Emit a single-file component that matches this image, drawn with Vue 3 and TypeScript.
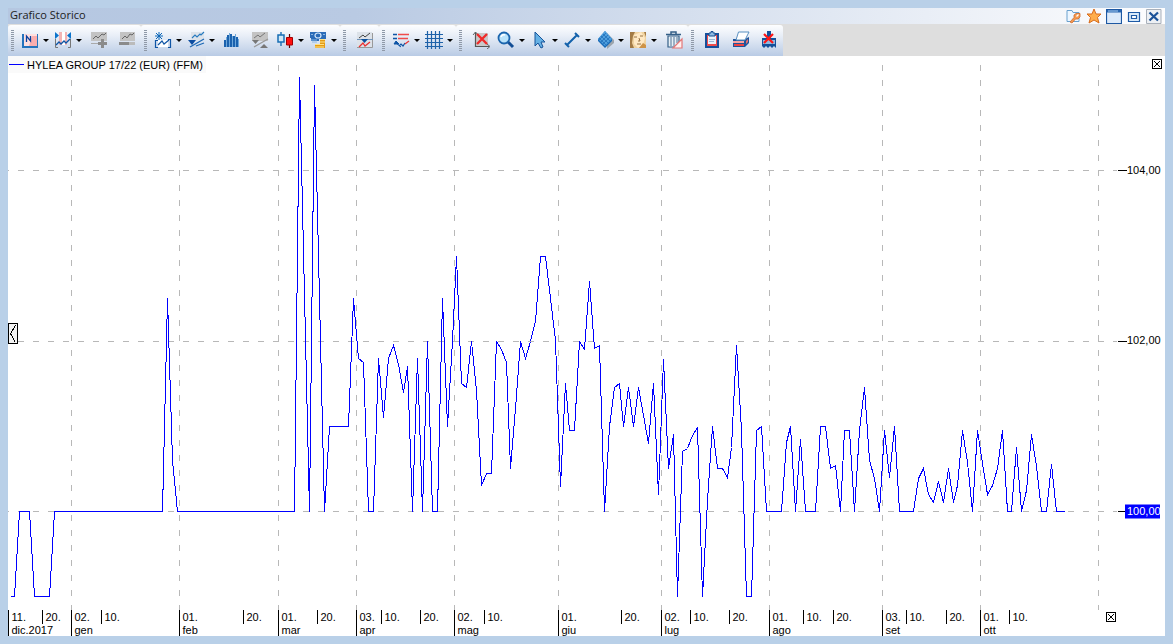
<script setup lang="ts">
interface Shape { d: string; f?: string; s?: string; w?: number }
interface Tool { icon: string; label: string; menu?: boolean }
interface Mark { x: number; day: string; month?: string }

const B = '#0f55a5'
const G = '#8b8b8b'
const icons: Record<string, Shape[]> = {
  period: [
    { d: 'M3 3H17V16H3Z', f: '#ffe0e0' }, { d: 'M11 5H16V15H8Z', f: '#fbaeae' },
    { d: 'M1 3H3V15H16V3H17V17H1Z', f: '#2574bd' }, { d: 'M5.500 11V5L9.500 10V5', s: '#0a3f9c', w: 1.3 },
  ],
  range: [
    { d: 'M5 1H8V14H5ZM11 1H13V14H11Z', f: '#f3b3b3' }, { d: 'M8 1H11V14H8Z', f: '#fff' },
    { d: 'M1 1L5 4.500L1 8ZM17 1L13 4.500L17 8Z', f: '#0b74cc' },
    { d: 'M1.500 8V16.500H4M16.500 8V16.500H14', s: '#777', w: 1 },
    { d: 'M2 14L5 11L7 13L10 10L12 12L16 8', s: B, w: 1.3 },
  ],
  add: [
    { d: 'M1 1H17V10H1Z', f: '#c3c3c3' }, { d: 'M3 8L6 5L8 7L12 3L14 4L16 2', s: '#666', w: 1 },
    { d: 'M11 8H14V11H17V14H14V17H11V14H8V11H11Z', f: G }, { d: 'M1 12.500H8', s: '#aaa', w: 1 },
  ],
  remove: [
    { d: 'M2 1H17V10H2Z', f: '#c3c3c3' }, { d: 'M4 8L7 5L9 7L12 3L14 4L16 2', s: '#666', w: 1 },
    { d: 'M1 11H11V14H1Z', f: G }, { d: 'M11 11H17V14H11Z', f: '#bbb' },
  ],
  newline: [
    { d: 'M5 1V9M1 5H9M2 2L8 8M8 2L2 8', s: '#0b66b8', w: 1 },
    { d: 'M4 9H14V16H4Z', f: '#fff' }, { d: 'M4 9.500H1.500V16.500H4M14 8.500H16.500V16.500H14', s: B, w: 1.2 },
    { d: 'M4 14L8 10L10 13L15 9', s: B, w: 1.2 },
  ],
  trend: [
    { d: 'M4 1H17V9H4Z', f: '#dde3ea' }, { d: 'M5 7L8 4L10 6L13 3L14 4L17 1', s: '#287bc0', w: 1.1 },
    { d: 'M1 9H9L5 14Z', f: '#0c4da1' }, { d: 'M3 16L17 8M9 15L17 12', s: '#1d69b5', w: 1.3 },
  ],
  bars: [
    { d: 'M1 16V9H3V16ZM4 16V4H6V16ZM7 16V3H9V16ZM10 16V5H12V16ZM13 16V6H15V16Z', f: '#1b62ae' },
    { d: 'M3.500 6V16M6.500 2V16M9.500 5V16M12.500 3V16M15.500 8V16', s: '#6fa8da', w: 1 },
  ],
  compare: [
    { d: 'M1 1H17V10H1Z', f: '#c3c3c3' }, { d: 'M3 7L7 4L9 6L14 2', s: '#777', w: 1 },
    { d: 'M1 9H8L4.500 13ZM9 17L13 13L17 17Z', f: '#777' }, { d: 'M3 16L17 8', s: '#999', w: 1.3 },
  ],
  candle: [
    { d: 'M5 1V15', s: '#176db4', w: 1.4 }, { d: 'M2 4H8V11H2Z', f: '#cfe8f8', s: '#176db4', w: 1.5 },
    { d: 'M13.500 3V17', s: '#650000', w: 1.2 }, { d: 'M10.500 6.500H16.500V14H10.500Z', f: '#ff1010', s: '#a00000', w: 1 },
  ],
  money: [
    { d: 'M1 1H17V8H10V10H2V7H1Z', f: '#2c6cb8' }, { d: 'M6 4.500A3 2.500 0 1 1 12 4.500A3 2.500 0 1 1 6 4.500', s: '#d4e7fa', w: 1.2 },
    { d: 'M2 3.500H4M14 3.500H16M2 9H8M3 11H8', s: '#8bb8e4', w: 1 },
    { d: 'M11 8H16V17H6V13H11Z', f: '#e59b16' }, { d: 'M11 8.500H16M11 11H16M6 13.500H15M6 16H15', s: '#ffe486', w: 1 },
  ],
  swap: [
    { d: 'M1 1H16V16H1Z', f: '#dce2e9' }, { d: 'M1 16.500H16.500V2', s: '#999', w: 1 },
    { d: 'M3 7L7 4L9 6L14 2', s: '#444', w: 1 }, { d: 'M1 8.500H17', s: '#7295bb', w: 1 }, { d: 'M5 8H12L8.500 12Z', f: '#0b4e9c' },
    { d: 'M3 16L7 12L9 15L14 11', s: '#ec3030', w: 1.3 },
  ],
  levels: [
    { d: 'M1 3.500H5M1 7.500H5', s: B, w: 1.5 }, { d: 'M6 3.500H17M6 7.500H16', s: '#ef4b4b', w: 1.5 },
    { d: 'M2 13L4 10L7 13ZM4 12L9 16', f: B, s: B, w: 1 }, { d: 'M7 15L9 13L11 15L13 12', s: B, w: 1.2 }, { d: 'M13 13L17 10', s: '#e83434', w: 1.2 },
  ],
  grid: [{ d: 'M2.500 0V18M6.500 0V18M10.500 0V18M14.500 0V18M0 3.500H18M0 7.500H18M0 11.500H18M0 15.500H18', s: '#1e62a9', w: 1.2 }],
  clear: [
    { d: 'M3 2H16V15H3Z', f: '#c9c9c9' }, { d: 'M3.500 1V15.500H17', s: '#555', w: 1.2 },
    { d: 'M1 4L3.500 1L6 4M15 13L18 15.500L15 18', s: '#666', w: 1 },
    { d: 'M5 3L15 13M15 3L5 13', s: '#ef2b2b', w: 2.4 },
  ],
  zoom: [
    { d: 'M11 11L16 16', s: '#124e96', w: 3 },
    { d: 'M1.500 7A5.500 5.500 0 1 1 12.500 7A5.500 5.500 0 1 1 1.500 7', f: '#b9e3fb', s: '#1b65ae', w: 1.8 },
    { d: 'M4 6Q5 3 8 4', s: '#fff', w: 1.5 },
  ],
  pointer: [{ d: 'M5 1V15L8 12L11 17L13 16L11 11H15Z', f: '#65b1e5', s: '#17549a', w: 1 }],
  line: [{ d: 'M4 14L14 4M2 12L6 16M12 2L16 6', s: '#1261ab', w: 2 }],
  layers: [
    { d: 'M11 2L18 9V12L11 18Z', f: '#9da5ad' }, { d: 'M2 8L9 0L16 8V10L9 17L2 10Z', f: '#186bb8' },
    { d: 'M2 8L9 0L16 8L9 15Z', f: '#4f9fdd' }, { d: 'M5 5L12 12M7 3L14 10M3 7L10 14M5 11L12 4M7 13L14 6M3 9L10 2', s: '#1b68b4', w: .7 },
  ],
  portrait: [
    { d: 'M1 1H17V17H1Z', f: '#f0d3a0' }, { d: 'M1 1H6L4 5L3 12L5 17H1ZM15 1H17V6Z', f: '#a37b45' },
    { d: 'M5 4L12 1L16 7L14 14L9 17L5 13Z', f: '#ffe9c4' }, { d: 'M5 6H8M11 5H14M10 7L11 10H9M8 13H12', s: '#8c6536', w: .9 },
    { d: 'M14 12L17 14V17H10', f: '#cd9348' },
  ],
  trash: [
    { d: 'M3 5H14V16H3Z', f: '#e7eff5', s: '#345f87', w: 1.2 }, { d: 'M1 3.500H16M6 3V1H11V3', s: '#345f87', w: 1.5 },
    { d: 'M6 6V15M9 6V15M12 6V12', s: '#517597', w: 1 }, { d: 'M8 17L17 8V17Z', f: '#fff0f0', s: '#e47777', w: 1.2 },
  ],
  clipboard: [
    { d: 'M1 2H15V17H1Z', f: '#164f9b' }, { d: 'M3 4H13V15H3Z', f: '#f04c4c' }, { d: 'M4 5H12V13H4Z', f: '#e9f2fb' },
    { d: 'M5 2H7V.500H9V2H11V5H5Z', f: '#8fbbe4', s: '#174f91', w: 1 }, { d: 'M5 8.500H11M5 10.500H10', s: '#9cb8d6', w: 1 },
  ],
  printer: [
    { d: 'M1 8H13L17 6V12L13 16H1Z', f: '#1e559b' }, { d: 'M6.500 1H17L13 9H4Z', f: '#fff', s: '#5990c1', w: 1 },
    { d: 'M1 10H12V12H1Z', f: '#f7a3a3' }, { d: 'M2 13H12V15H2Z', f: '#ed4040' }, { d: 'M14 10L16 8V11L14 13Z', f: '#e76c6c' },
  ],
  erase: [
    { d: 'M7 0H11V7H16V17L14 15L12 17L10 15L8 17L6 15L4 17L2 15V7H7Z', f: '#12509b' },
    { d: 'M3 9H15V13H3Z', f: '#8dbbe2' }, { d: 'M4 3L13 12M13 3L4 12', s: '#ff1515', w: 2.2 },
  ],
  settings: [
    { d: 'M1 2.500H6L7 4.500H13V13.500H1Z', f: '#edf6ff', s: '#6aa1cf', w: 1 },
    { d: 'M4 14L8 9.500V7L10 5.500H14V9L12 11H9.500L6 15Z', f: '#f39a52', s: '#d06a28', w: .8 }, { d: 'M10.500 8.500L12.500 6.500', s: '#fff', w: 1.3 },
  ],
  star: [{ d: 'M8 1L10 6H15L11.500 9.500L13 15L8 12L3 15L4.500 9.500L1 6H6Z', f: '#ffad4a', s: '#d66b1d', w: 1 }],
  window: [{ d: 'M.5 1.500H15.500V15.500H.5Z', f: '#dceafa', s: '#1d58a3', w: 1.2 }, { d: 'M1 2H15V4.500H1Z', f: '#2765b0' }, { d: 'M2 3H12', s: '#a8cdf0', w: 1 }],
  restore: [{ d: 'M2.500 4.500H13.500V13.500H2.500Z', f: '#d8eafa', s: '#1e5aa6', w: 1.2 }, { d: 'M5.500 7.500H10.500V10.500H5.500Z', f: '#fff', s: '#1e5aa6', w: 1.2 }],
  close: [{ d: 'M.5 1.500H15V15.500H.5Z', f: '#edf0f4', s: '#a9b0ba', w: 1 }, { d: 'M3.500 4.500L12 12.500M12 4.500L3.500 12.500', s: '#1b5298', w: 2.3 }],
}

const groups: Tool[][] = [
  [{ icon: 'period', label: 'Periodo', menu: true }, { icon: 'range', label: 'Intervallo', menu: true }, { icon: 'add', label: 'Aggiungi' }, { icon: 'remove', label: 'Rimuovi' }],
  [{ icon: 'newline', label: 'Nuovo grafico', menu: true }, { icon: 'trend', label: 'Tendenza', menu: true }, { icon: 'bars', label: 'Volumi' }, { icon: 'compare', label: 'Confronta' }, { icon: 'candle', label: 'Candele', menu: true }, { icon: 'money', label: 'Valuta', menu: true }],
  [{ icon: 'swap', label: 'Scambia' }],
  [{ icon: 'levels', label: 'Livelli', menu: true }, { icon: 'grid', label: 'Griglia', menu: true }],
  [{ icon: 'clear', label: 'Cancella assi' }, { icon: 'zoom', label: 'Zoom', menu: true }, { icon: 'pointer', label: 'Puntatore', menu: true }, { icon: 'line', label: 'Linea', menu: true }, { icon: 'layers', label: 'Livelli grafici', menu: true }, { icon: 'portrait', label: 'Fibonacci', menu: true }, { icon: 'trash', label: 'Elimina disegni' }],
  [{ icon: 'clipboard', label: 'Copia' }, { icon: 'printer', label: 'Stampa' }, { icon: 'erase', label: 'Azzera' }],
]
const windowTools: Tool[] = [
  { icon: 'settings', label: 'Impostazioni' }, { icon: 'star', label: 'Preferiti' }, { icon: 'window', label: 'Finestra' },
  { icon: 'restore', label: 'Ripristina' }, { icon: 'close', label: 'Chiudi' },
]

// Plot units: the time axis is 1109 wide and the value axis 554 high.
const W = 1109
const H = 554
const marks: Mark[] = [
  { x: 0, day: '11.', month: 'dic.2017' }, { x: 34, day: '20.' },
  { x: 63, day: '02.', month: 'gen' }, { x: 93, day: '10.' },
  { x: 171, day: '01.', month: 'feb' }, { x: 235, day: '20.' },
  { x: 270, day: '01.', month: 'mar' }, { x: 309, day: '20.' },
  { x: 348, day: '03.', month: 'apr' }, { x: 373, day: '10.' }, { x: 412, day: '20.' },
  { x: 446, day: '02.', month: 'mag' }, { x: 476, day: '10.' },
  { x: 550, day: '01.', month: 'giu' }, { x: 613, day: '20.' },
  { x: 653, day: '02.', month: 'lug' }, { x: 682, day: '10.' }, { x: 721, day: '20.' },
  { x: 761, day: '01.', month: 'ago' }, { x: 795, day: '10.' }, { x: 825, day: '20.' },
  { x: 874, day: '03.', month: 'set' }, { x: 898, day: '10.' }, { x: 938, day: '20.' },
  { x: 972, day: '01.', month: 'ott' }, { x: 1001, day: '10.' },
]
const gridX = [...marks.filter(m => m.month && m.x > 0).map(m => m.x), 1090]
const levels = [{ y: 114, text: '104,00' }, { y: 285, text: '102,00' }, { y: 455, text: '100,00', current: true }]
const pctX = (x: number) => `${((x + 0.5) / W) * 100}%`
const pctY = (y: number) => `${((y + 0.5) / H) * 100}%`

const prices = `2,540 6,540 11,455 21,455 26,540 41,540 46,455 154,455 159,242 164,404 169,455 286,455
291,21 301,455 306,29 316,455 321,370 340,370 345,242 350,302 355,306 360,455 365,455 370,302 375,361 380,302
385,289 390,308 395,336 399,310 404,455 409,302 414,455 419,285 424,455 429,455 434,242 439,370 444,284 448,200
453,327 458,331 463,285 468,334 473,429 478,417 483,417 488,285 493,293 498,306 502,412 507,352 512,285 517,302
522,285 527,265 532,200 537,200 542,242 547,284 552,430 557,327 561,374 566,374 571,285 576,293 581,225 586,292
591,289 596,455 601,370 606,331 611,327 615,370 620,331 625,370 630,331 635,359 640,387 645,327 650,438 655,303
660,412 665,378 669,540 674,395 679,392 684,379 689,371 694,540 699,444 704,370 709,412 714,412 719,421 723,391
728,289 733,374 738,540 743,540 748,374 753,370 758,455 773,455 778,386 782,370 787,455 792,383 797,455 807,455
812,370 817,370 822,412 827,409 832,455 836,374 841,374 846,455 851,374 856,331 861,404 866,422 871,455 876,374
881,421 886,370 891,455 905,455 910,422 915,412 920,438 925,446 930,425 935,446 940,412 945,446 949,429 954,374
959,406 964,455 969,374 974,407 979,438 984,429 989,412 994,374 999,455 1003,455 1008,391 1013,455 1018,434
1023,378 1028,410 1033,455 1038,455 1043,408 1048,455 1056,455`
const points = prices.trim().split(/\s+/).map((p) => {
  const [x, y] = p.split(',').map(Number)
  return `${x + 0.5},${y + 0.5}`
}).join(' ')
</script>

<template>
  <main class="frame">
    <header class="titlebar">
      <h1>Grafico Storico</h1>
      <div class="window-tools">
        <button v-for="t in windowTools" :key="t.icon" type="button" class="win" :aria-label="t.label">
          <svg width="16" height="16" viewBox="0 0 16 16" aria-hidden="true">
            <path v-for="(p, i) in icons[t.icon]" :key="i" :d="p.d" :fill="p.f || 'none'" :stroke="p.s || 'none'" :stroke-width="p.w || 0" />
          </svg>
        </button>
      </div>
    </header>

    <nav class="toolbar" aria-label="Strumenti">
      <div v-for="(g, gi) in groups" :key="gi" class="group">
        <span class="grip"></span>
        <button v-for="t in g" :key="t.icon" type="button" class="tool" :class="{ menu: t.menu }" :aria-label="t.label">
          <svg width="18" height="18" viewBox="0 0 18 18" aria-hidden="true">
            <path v-for="(p, i) in icons[t.icon]" :key="i" :d="p.d" :fill="p.f || 'none'" :stroke="p.s || 'none'" :stroke-width="p.w || 0" />
          </svg>
          <span v-if="t.menu" class="caret"></span>
        </button>
      </div>
    </nav>

    <section class="chart" aria-label="Grafico">
      <div class="plot">
        <svg class="fill" :viewBox="`0 0 ${W} ${H}`" preserveAspectRatio="none" shape-rendering="crispEdges" aria-hidden="true">
          <line v-for="x in gridX" :key="'x' + x" class="gridline" :x1="x + 0.5" :x2="x + 0.5" y1="0" :y2="H" stroke-dashoffset="6" />
          <line v-for="l in levels" :key="'y' + l.y" class="gridline" x1="0" :x2="W" :y1="l.y + 0.5" :y2="l.y + 0.5" stroke-dashoffset="5" />
          <polyline class="series" :points="points" />
        </svg>
        <div class="legend"><span class="swatch"></span>HYLEA GROUP 17/22 (EUR) (FFM)</div>
        <button type="button" class="handle" aria-label="Espandi">
          <svg width="8" height="20" viewBox="0 0 8 20" shape-rendering="crispEdges"><path d="M6.500 1.500L1.500 9.500L6.500 18.500" fill="none" stroke="#000" /></svg>
        </button>
      </div>

      <svg class="values">
        <g v-for="l in levels" :key="l.y">
          <line :x1="1" :x2="10" :y1="pctY(l.y)" :y2="pctY(l.y)" class="tick" />
          <svg :y="pctY(l.y)" x="0" class="anchor">
            <rect v-if="l.current" x="8" y="-7" width="35" height="14" fill="#0000ff" />
            <text x="10" y="3" :class="{ current: l.current }">{{ l.text }}</text>
          </svg>
        </g>
      </svg>

      <svg class="dates">
        <g v-for="m in marks" :key="m.x">
          <line class="tick" :x1="pctX(m.x)" :x2="pctX(m.x)" y1="0" :y2="m.month ? 26 : 14" />
          <text :x="pctX(m.x)" dx="3" y="11">{{ m.day }}</text>
          <text v-if="m.month" :x="pctX(m.x)" dx="3" y="24">{{ m.month }}</text>
        </g>
      </svg>

      <button v-for="c in ['top', 'bottom']" :key="c" type="button" class="box" :class="c" aria-label="Chiudi pannello">
        <svg width="8" height="8" viewBox="0 0 8 8" shape-rendering="crispEdges"><path d="M1 1L7 7M7 1L1 7" stroke="#000" fill="none" /></svg>
      </button>
    </section>
  </main>
</template>

<style>
body { background: #b9d0e8; }
</style>

<style scoped>
.frame {
  box-sizing: border-box;
  min-height: 100vh;
  padding: 8px;
  display: flex;
  flex-direction: column;
  background: #b9d0e8;
  font-family: "Liberation Sans", Arial, sans-serif;
  font-size: 11px;
  color: #000;
}
button { border: 0; padding: 0; margin: 0; background: none; }
button svg { display: block; flex: none; }
.titlebar {
  height: 16px;
  display: flex;
  align-items: flex-start;
  justify-content: space-between;
  background: linear-gradient(90deg, #b5c7e1 0%, #b9cae3 30%, #fdfdfe 100%);
}
h1 {
  margin: 0 0 0 2px;
  font: 400 11px/14px "Open Sans", "Noto Sans", sans-serif;
  color: #1c1c1c;
}
.window-tools { display: flex; padding-right: 1px; }
.win { width: 20px; height: 16px; display: flex; justify-content: center; }
.toolbar { height: 32px; display: flex; background: #dedede; }
.group {
  display: flex;
  align-items: stretch;
  margin-top: 1px;
  border-radius: 3px 3px 0 0;
  background: linear-gradient(#fdfeff 0%, #e8eef7 35%, #b9cbe5 100%);
}
.grip {
  width: 3px;
  height: 21px;
  margin: 5px 5px 5px 3px;
  background: repeating-linear-gradient(#8f99a8 0 1px, transparent 1px 2px);
}
.tool { width: 28px; display: flex; align-items: center; justify-content: center; padding-bottom: 1px; }
.tool.menu { width: 33px; justify-content: flex-start; padding-left: 2px; }
.caret {
  margin-left: 4px;
  border: 3px solid transparent;
  border-top-color: #000;
  border-bottom-width: 0;
}
.chart {
  position: relative;
  flex: 1;
  display: grid;
  grid-template-columns: 1fr 48px;
  grid-template-rows: minmax(200px, 1fr) 26px;
  background: #fff;
}
.plot { position: relative; }
.fill { position: absolute; inset: 0; width: 100%; height: 100%; }
.gridline { stroke: #b8b8b8; stroke-width: 1; stroke-dasharray: 6 9; vector-effect: non-scaling-stroke; }
.series { fill: none; stroke: #0000ff; stroke-width: 1; vector-effect: non-scaling-stroke; }
.legend {
  position: absolute;
  left: 0;
  top: 0;
  display: flex;
  align-items: center;
  gap: 3px;
  height: 17px;
  padding: 0 3px 0 1px;
  background: #fafafa;
  white-space: nowrap;
}
.swatch { width: 15px; height: 1px; background: #0000ff; }
.handle {
  position: absolute;
  left: 0;
  top: 50%;
  margin-top: -10px;
  width: 10px;
  height: 21px;
  box-sizing: border-box;
  border: 1px solid #000;
  background: #f4f4f4;
  overflow: hidden;
}
.values { width: 100%; height: 100%; display: block; overflow: visible; }
.anchor { overflow: visible; }
.dates { width: 100%; height: 26px; display: block; overflow: visible; }
.tick { stroke: #000; stroke-width: 1; shape-rendering: crispEdges; }
.current { fill: #fff; }
.box {
  position: absolute;
  width: 10px;
  height: 10px;
  box-sizing: border-box;
  border: 1px solid #000;
  background: #fff;
}
.top { right: 3px; top: 3px; }
.bottom { right: 49px; bottom: 14px; }
</style>
